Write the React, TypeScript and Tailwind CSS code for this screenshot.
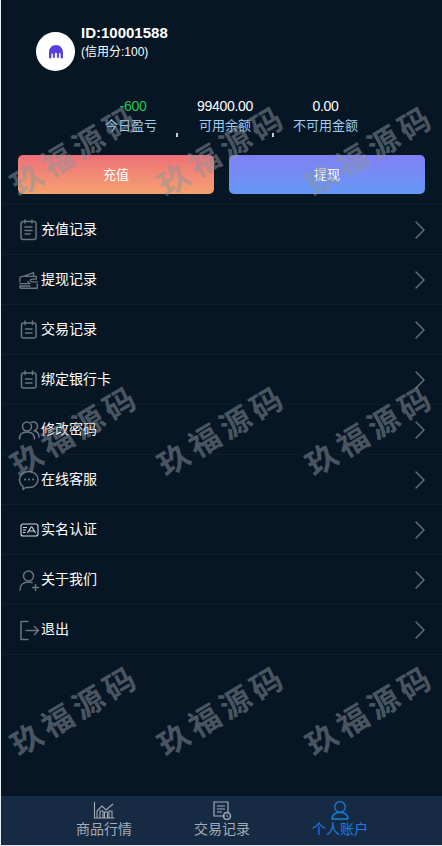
import { ChevronRight } from 'lucide-react';
import type { ReactNode } from 'react';

const stroke = '#69747e';

function Svg({ children }: { children: ReactNode }) {
  return (
    <svg width="22" height="22" viewBox="0 0 22 22" fill="none" stroke={stroke} strokeWidth="1.500" strokeLinecap="round" strokeLinejoin="round">
      {children}
    </svg>
  );
}

const icons: Record<string, ReactNode> = {
  note: (
    <Svg>
      <rect x="3" y="2.500" width="15" height="18" rx="2" />
      <path d="M7 1v3M14 1v3M7 8h7M7 11.500h7M7 15h5" />
    </Svg>
  ),
  wallet: (
    <svg width="24" height="22" viewBox="0 0 24 22" fill="none" stroke={stroke} strokeWidth="1.500" strokeLinecap="round" strokeLinejoin="round">
      <path d="M6 7 17 3v4M2 13v-3q0-3 3-3h15M20 7v3h-5a1.500 1.500 0 0 0 0 3h6M2 15h11l-2.500-2.500M21 15v5H4q-2 0-2-2v-.5h11" />
    </svg>
  ),
  calendar: (
    <Svg>
      <rect x="3.500" y="4" width="14.500" height="15" rx="2" />
      <path d="M7 2v3.500M14.500 2v3.500M7.500 10h6.500M7.500 14h6.500" />
    </Svg>
  ),
  users: (
    <Svg>
      <circle cx="9" cy="7.500" r="4.500" />
      <path d="M1.500 20c0-4.500 3-7 7.500-7s7.500 2.500 7.500 7M13.500 3.200c3.500-1 6 1 6 4s-2 4-3.500 4.500c3 .5 5 3 5 6.500" />
    </Svg>
  ),
  chat: (
    <Svg>
      <path d="M11 2.500c5 0 9 3.500 9 8s-4 8-9 8H7.500L5 20.500v-3.200c-2.300-1.500-3.500-4-3.500-6.800 0-4.500 4.500-8 9.500-8Z" />
      <path d="M7 10.500h.1M11 10.500h.1M15 10.500h.1" strokeWidth="2" />
    </Svg>
  ),
  idcard: (
    <svg width="22" height="22" viewBox="0 0 22 22" fill="none" stroke="#d3d8dc" strokeWidth="1.100" strokeLinejoin="round">
      <rect x="3" y="5" width="17" height="12" rx="2" />
      <path d="M5 8.500h4M5 11h3M5 13.500h2.500M9.500 14 13 8h1l3.500 6M11 12h5" />
    </svg>
  ),
  userplus: (
    <Svg>
      <circle cx="10.500" cy="7" r="5" />
      <path d="M2 21c0-5 3.500-8 8.500-8 1.500 0 2.500.2 3.500.7M14.500 18.500h6M17.500 15.500v6" />
    </Svg>
  ),
  logout: (
    <Svg>
      <path d="M10 2.500H3v18h7M8 11.500h12M16.500 7.500l4 4-4 4" />
    </Svg>
  ),
};

const rows = [
  { label: '充值记录', icon: 'note' },
  { label: '提现记录', icon: 'wallet' },
  { label: '交易记录', icon: 'calendar' },
  { label: '绑定银行卡', icon: 'calendar' },
  { label: '修改密码', icon: 'users' },
  { label: '在线客服', icon: 'chat' },
  { label: '实名认证', icon: 'idcard' },
  { label: '关于我们', icon: 'userplus' },
  { label: '退出', icon: 'logout' },
];

const stats = [
  { value: '-600', label: '今日盈亏', green: true },
  { value: '99400.00', label: '可用余额' },
  { value: '0.00', label: '不可用金额' },
];

export default function App() {
  return (
    <div className="relative h-[846px] w-[442px] overflow-hidden bg-[#e6edf3] pb-px pl-px font-['Liberation_Sans','Noto_Sans_CJK_SC',sans-serif] text-white">
      <div className="flex h-[845px] w-[441px] flex-col bg-[#061624]">
        {/* header */}
        <div className="flex items-start pl-[35px] pt-[23px]">
          <div className="mt-[9px] flex h-[39px] w-[39px] items-center justify-center rounded-full bg-white">
            <svg width="16" height="16" viewBox="0 0 16 16" fill="#5741d9">
              <path d="M8 1C3.800 1 1 4.300 1 8.300v5a1.200 1.200 0 0 0 2.400 0V9.800a.8.8 0 0 1 1.400 0v3.500a1.200 1.200 0 0 0 2.100 0V9.800a1 1 0 0 1 2 0v3.500a1.200 1.200 0 0 0 2.100 0V9.800a.8.8 0 0 1 1.600 0v3.500a1.200 1.200 0 0 0 2.400 0v-5C15 4.300 12.200 1 8 1Z" />
            </svg>
          </div>
          <div className="ml-[6px]">
            <div className="text-[15px] font-bold leading-[20px]">ID:10001588</div>
            <div className="text-[12px] leading-[18px]">(信用分:100)</div>
          </div>
        </div>

        {/* stats */}
        <div className="mt-[25px] flex items-end pl-[104px]">
          {stats.map((s, i) => (
            <div key={s.label} className="flex items-end">
              {i > 0 && <span className="mb-[-2px] ml-[19px] mr-[19px] h-[4px] w-[2px] bg-[#c9ced3]" />}
              <div className="flex flex-col items-center">
                <div className={s.green ? 'ml-[4px] text-[14px] leading-[20px] tracking-[-0.3px] text-[#1fc95a]' : 'text-[14px] leading-[20px] tracking-[-0.3px] text-white'}>{s.value}</div>
                <div className="text-[13px] leading-[19px] text-[#9fcdf2]">{s.label}</div>
              </div>
            </div>
          ))}
        </div>

        {/* buttons */}
        <div className="mt-[20px] flex gap-[15px] pl-[17px]">
          <button className="h-[39px] w-[196px] rounded-[5px] bg-gradient-to-b from-[#ee6f78] to-[#f4a26e] text-[13px]">充值</button>
          <button className="h-[39px] w-[196px] rounded-[5px] bg-gradient-to-b from-[#8080f4] to-[#6398f5] text-[13px]">提现</button>
        </div>

        {/* menu */}
        <div className="mt-[10px] border-t border-[#0e1e2c]">
          {rows.map((r) => (
            <div key={r.label} className="flex h-[50px] items-center border-b border-[#0e1e2c] pl-[17px] pr-[6px]">
              <span className="flex w-[22px] justify-center">{icons[r.icon]}</span>
              <span className="ml-[1px] flex-1 text-[14px]">{r.label}</span>
              <ChevronRight size={32} strokeWidth={1.200} className="text-[#5f6b75]" />
            </div>
          ))}
        </div>

        {/* bottom nav */}
        <div className="mt-auto flex h-[49px] bg-[#172a43] pl-[44px]">
          <div className="flex w-[118px] flex-col items-center pt-[5px]">
            <svg width="22" height="19" viewBox="0 0 22 19" fill="none" stroke="#a3abb5" strokeWidth="1.100">
              <path d="M1.500 1v16h20M4 17v-7M4 10l5-5 4 4 7-6M7 17v-7h3v7M11.500 17v-6h3v6M16 17v-7h3v7" />
            </svg>
            <span className="mt-[-1px] text-[14px] leading-[20px] text-[#a3abb5]">商品行情</span>
          </div>
          <div className="flex w-[118px] flex-col items-center pt-[5px]">
            <svg width="20" height="19" viewBox="0 0 20 19" fill="none" stroke="#a3abb5" strokeWidth="1.200">
              <path d="M13 15H2V1h14v11M5 5h8M5 8h8M5 11h5" />
              <circle cx="15" cy="15" r="3.500" strokeWidth="1.500" />
              <path d="M15 13.500V15l1 1" strokeWidth="1" />
            </svg>
            <span className="mt-[-1px] text-[14px] leading-[20px] text-[#a3abb5]">交易记录</span>
          </div>
          <div className="flex w-[118px] flex-col items-center pt-[5px]">
            <svg width="20" height="19" viewBox="0 0 20 19" fill="none" stroke="#1a7ee0" strokeWidth="1.300">
              <circle cx="10" cy="6" r="5.300" />
              <path d="M2 18c0-4 3-6.500 8-6.500s8 2.500 8 6.500Z" />
            </svg>
            <span className="mt-[-1px] text-[14px] leading-[20px] text-[#1a7ee0]">个人账户</span>
          </div>
        </div>
      </div>

      {/* watermark layer */}
      <div className="pointer-events-none absolute inset-0 grid auto-rows-[280px] grid-cols-[repeat(3,147.5px)] pt-[8px]">
        {Array.from({ length: 9 }).map((_, i) => (
          <div key={i} className="flex items-center justify-center">
            <span className="-rotate-[31deg] whitespace-nowrap font-['Noto_Sans_CJK_SC',sans-serif] text-[31px] font-bold leading-none tracking-[5px] text-[#8d959d]/50">
              玖福源码
            </span>
          </div>
        ))}
      </div>
    </div>
  );
}
